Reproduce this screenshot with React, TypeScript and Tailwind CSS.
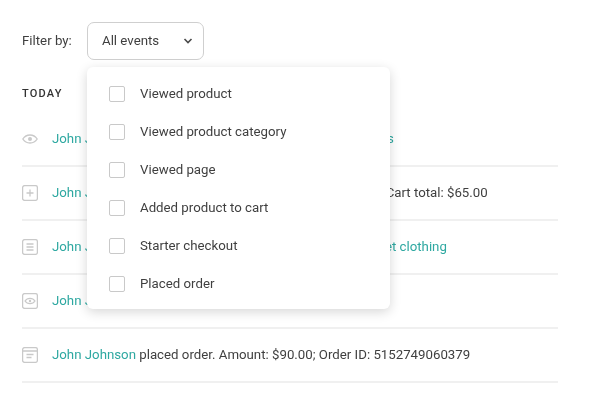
const Box = ({ children }: { children?: React.ReactNode }) => (
  <svg width="16" height="16" viewBox="0 0 16 16" fill="none" stroke="#c9c9c9" strokeWidth="1.3" className="shrink-0">
    <rect x="0.6" y="0.6" width="14.8" height="14.8" rx="2" />
    {children}
  </svg>
);

const EyeBare = () => (
  <svg width="16" height="16" viewBox="0 0 16 16" fill="none" stroke="#c9c9c9" strokeWidth="1.3" className="shrink-0">
    <path d="M0.8 8C2.600 5.300 5 4 8 4s5.400 1.300 7.200 4c-1.800 2.700-4.200 4-7.200 4S2.600 10.700.8 8z" />
    <circle cx="8" cy="8" r="2" fill="#c9c9c9" stroke="none" />
  </svg>
);

const rows = [
  {
    icon: <EyeBare />,
    body: <><span className="text-[#2ea8a1]">John Johnson</span> viewed product category <span className="text-[#2ea8a1]">Tanks and T-shirts</span></>,
  },
  {
    icon: (
      <Box>
        <path d="M8 4.500v7M4.500 8h7" />
      </Box>
    ),
    body: <><span className="text-[#2ea8a1]">John Johnson</span> added product to cart: Basic Cotton Shirt. Cart total: $65.00</>,
  },
  {
    icon: (
      <Box>
        <path d="M4.500 5h7M4.500 8h7M4.500 11h7" />
      </Box>
    ),
    body: <><span className="text-[#2ea8a1]">John Johnson</span> viewed page: <span className="text-[#2ea8a1]">Sale: Up to 50% off best street clothing</span></>,
  },
  {
    icon: (
      <Box>
        <path d="M3 8c1.200-1.800 2.900-2.700 5-2.700s3.800.9 5 2.700c-1.200 1.800-2.900 2.700-5 2.700S4.200 9.800 3 8z" />
        <circle cx="8" cy="8" r="1.200" fill="#c9c9c9" stroke="none" />
      </Box>
    ),
    body: <><span className="text-[#2ea8a1]">John Johnson</span> viewed product</>,
  },
  {
    icon: (
      <Box>
        <path d="M1 4h14M4.500 7.500h7M4.500 10.500h5" />
      </Box>
    ),
    body: <><span className="text-[#2ea8a1]">John Johnson</span> placed order. Amount: $90.00; Order ID: 5152749060379</>,
  },
];

const options = [
  "Viewed product",
  "Viewed product category",
  "Viewed page",
  "Added product to cart",
  "Starter checkout",
  "Placed order",
];

export default function App() {
  return (
    <div className="relative h-[400px] w-[590px] overflow-hidden bg-white pl-[22px] pr-[32px] pt-[22px] font-['Roboto',sans-serif] text-[13.25px] text-[#3f3f3f] blur-[0.35px]">
      <div className="flex items-center">
        <span className="w-[65px]">Filter by:</span>
        <button className="flex h-[38px] w-[117px] items-center justify-between rounded-[7px] border border-[#cfcfcf] bg-white pl-[14px] pr-[10px] text-[13.25px] text-[#3f3f3f]">
          All events
          <svg width="10" height="6" viewBox="0 0 10 6" fill="none" stroke="#4a4a4a" strokeWidth="1.600">
            <path d="M1.500 1l3.500 3.500L8.500 1" />
          </svg>
        </button>
      </div>

      <div className="mt-[27px] text-[11px] font-medium leading-[14px] tracking-[0.11em] text-[#333333]">TODAY</div>

      <div className="mt-[12px]">
        {rows.map((r, i) => (
          <div key={i} className="flex h-[54px] items-center gap-[14px] border-b-2 border-[#f0f0f0] pb-[1px]">
            {r.icon}
            <span className="whitespace-nowrap">{r.body}</span>
          </div>
        ))}
      </div>

      <div className="absolute left-[87px] top-[67px] w-[303px] rounded-[6px] bg-white py-[7px] shadow-[0_3px_12px_rgba(0,0,0,0.16)]">
        {options.map((o) => (
          <div key={o} className="flex h-[38px] items-center gap-[15px] pl-[22px] pt-[1px]">
            <span className="h-[16px] w-[16px] rounded-[2px] border border-[#c9c9c9] bg-white" />
            <span>{o}</span>
          </div>
        ))}
      </div>
    </div>
  );
}
